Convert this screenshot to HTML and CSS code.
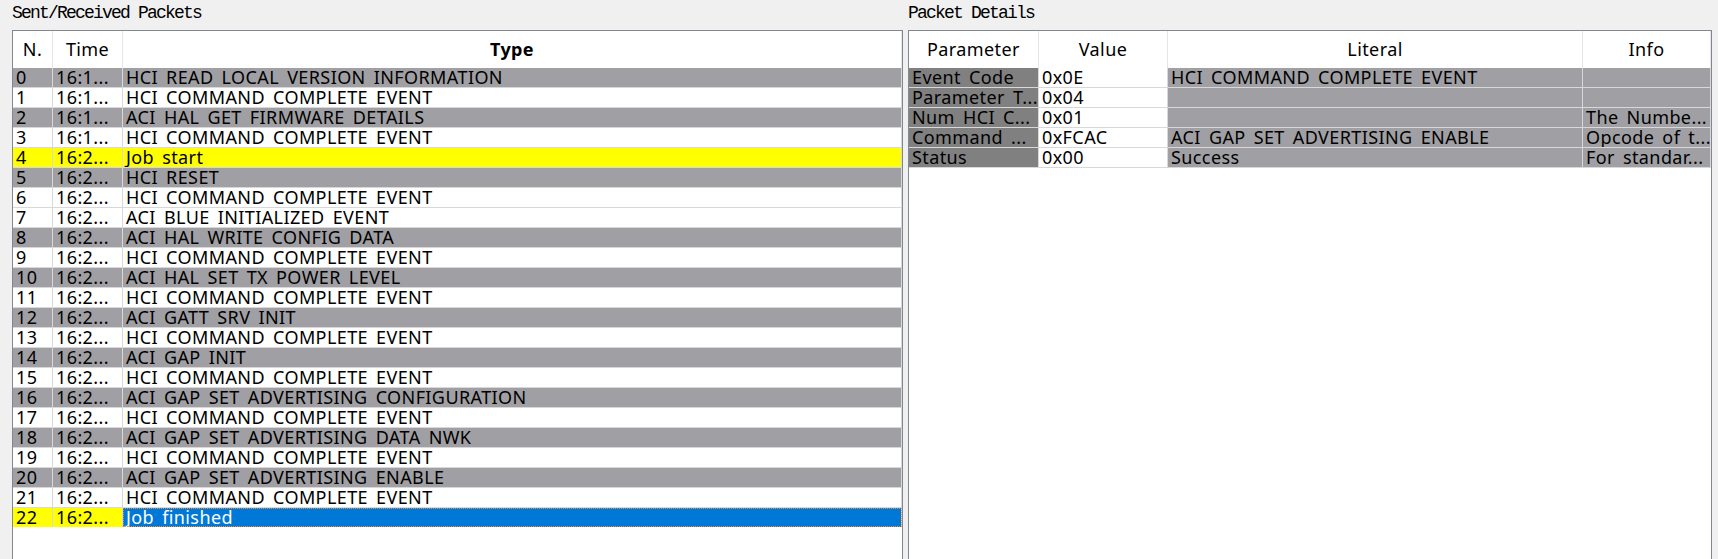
FILE: index.html
```html
<!DOCTYPE html>
<html>
<head>
<meta charset="utf-8">
<link rel="stylesheet" href="styles.css">
</head>
<body>
<div class="app">
  <section class="pane pane-left">
    <div class="pane-title">Sent/Received Packets</div>
    <div class="view">
      <div class="grid packets head">
        <div class="hc">N.</div><div class="hc">Time</div><div class="hc bold">Type</div>
      </div>
      <div class="grid packets row gray"><div class="c">0</div><div class="c">16:1...</div><div class="c">HCI READ LOCAL VERSION INFORMATION</div></div>
      <div class="grid packets row"><div class="c">1</div><div class="c">16:1...</div><div class="c">HCI COMMAND COMPLETE EVENT</div></div>
      <div class="grid packets row gray"><div class="c">2</div><div class="c">16:1...</div><div class="c">ACI HAL GET FIRMWARE DETAILS</div></div>
      <div class="grid packets row"><div class="c">3</div><div class="c">16:1...</div><div class="c">HCI COMMAND COMPLETE EVENT</div></div>
      <div class="grid packets row yellow"><div class="c">4</div><div class="c">16:2...</div><div class="c">Job start</div></div>
      <div class="grid packets row gray"><div class="c">5</div><div class="c">16:2...</div><div class="c">HCI RESET</div></div>
      <div class="grid packets row"><div class="c">6</div><div class="c">16:2...</div><div class="c">HCI COMMAND COMPLETE EVENT</div></div>
      <div class="grid packets row"><div class="c">7</div><div class="c">16:2...</div><div class="c">ACI BLUE INITIALIZED EVENT</div></div>
      <div class="grid packets row gray"><div class="c">8</div><div class="c">16:2...</div><div class="c">ACI HAL WRITE CONFIG DATA</div></div>
      <div class="grid packets row"><div class="c">9</div><div class="c">16:2...</div><div class="c">HCI COMMAND COMPLETE EVENT</div></div>
      <div class="grid packets row gray"><div class="c">10</div><div class="c">16:2...</div><div class="c">ACI HAL SET TX POWER LEVEL</div></div>
      <div class="grid packets row"><div class="c">11</div><div class="c">16:2...</div><div class="c">HCI COMMAND COMPLETE EVENT</div></div>
      <div class="grid packets row gray"><div class="c">12</div><div class="c">16:2...</div><div class="c">ACI GATT SRV INIT</div></div>
      <div class="grid packets row"><div class="c">13</div><div class="c">16:2...</div><div class="c">HCI COMMAND COMPLETE EVENT</div></div>
      <div class="grid packets row gray"><div class="c">14</div><div class="c">16:2...</div><div class="c">ACI GAP INIT</div></div>
      <div class="grid packets row"><div class="c">15</div><div class="c">16:2...</div><div class="c">HCI COMMAND COMPLETE EVENT</div></div>
      <div class="grid packets row gray"><div class="c">16</div><div class="c">16:2...</div><div class="c">ACI GAP SET ADVERTISING CONFIGURATION</div></div>
      <div class="grid packets row"><div class="c">17</div><div class="c">16:2...</div><div class="c">HCI COMMAND COMPLETE EVENT</div></div>
      <div class="grid packets row gray"><div class="c">18</div><div class="c">16:2...</div><div class="c">ACI GAP SET ADVERTISING DATA NWK</div></div>
      <div class="grid packets row"><div class="c">19</div><div class="c">16:2...</div><div class="c">HCI COMMAND COMPLETE EVENT</div></div>
      <div class="grid packets row gray"><div class="c">20</div><div class="c">16:2...</div><div class="c">ACI GAP SET ADVERTISING ENABLE</div></div>
      <div class="grid packets row"><div class="c">21</div><div class="c">16:2...</div><div class="c">HCI COMMAND COMPLETE EVENT</div></div>
      <div class="grid packets row yellow last"><div class="c">22</div><div class="c">16:2...</div><div class="c selected">Job finished</div></div>
    </div>
  </section>
  <section class="pane pane-right">
    <div class="pane-title">Packet Details</div>
    <div class="view">
      <div class="grid details head">
        <div class="hc">Parameter</div><div class="hc">Value</div><div class="hc">Literal</div><div class="hc">Info</div>
      </div>
      <div class="grid details row"><div class="c dark">Event Code</div><div class="c white">0x0E</div><div class="c gray">HCI COMMAND COMPLETE EVENT</div><div class="c gray"></div></div>
      <div class="grid details row"><div class="c dark">Parameter T...</div><div class="c white">0x04</div><div class="c gray"></div><div class="c gray"></div></div>
      <div class="grid details row"><div class="c dark">Num HCI C...</div><div class="c white">0x01</div><div class="c gray"></div><div class="c gray">The Numbe...</div></div>
      <div class="grid details row"><div class="c dark">Command ...</div><div class="c white">0xFCAC</div><div class="c gray">ACI GAP SET ADVERTISING ENABLE</div><div class="c gray">Opcode of t...</div></div>
      <div class="grid details row"><div class="c dark">Status</div><div class="c white">0x00</div><div class="c gray">Success</div><div class="c gray">For standar...</div></div>
    </div>
  </section>
</div>
</body>
</html>
```

FILE: styles.css
```css
html, body {
  margin: 0;
  padding: 0;
  height: 559px;
  overflow: hidden;
  background: #f0f0f0;
}

.app {
  display: flex;
  height: 559px;
  padding: 0 6px 0 12px;
  gap: 5px;
  box-sizing: border-box;
}

.pane {
  display: flex;
  flex-direction: column;
}

.pane-left { width: 891px; }
.pane-right { width: 804px; }

.pane-title {
  height: 30px;
  font-family: "Liberation Mono", monospace;
  font-size: 18px;
  letter-spacing: -1.8px;
  line-height: 26px;
  color: #000;
  white-space: nowrap;
}

.view {
  flex: 1;
  background: #fff;
  border: 1px solid #828790;
  border-bottom: none;
  font-family: "Noto Sans", sans-serif;
  font-size: 18px;
  letter-spacing: 0.4px;
  word-spacing: 3px;
  color: #000;
}

.grid {
  display: grid;
}

.packets { grid-template-columns: 40px 70px 1fr; }
.details { grid-template-columns: 130px 129px 415px 1fr; }

.head {
  height: 37px;
  background: #fff;
}

.hc {
  border-right: 1px solid #e5e5e5;
  text-align: center;
  line-height: 37px;
  white-space: nowrap;
  overflow: hidden;
}

.hc.bold { font-weight: bold; }

.row {
  height: 20px;
  border-bottom: 1px solid #d8d8d8;
  box-sizing: border-box;
}

.row.last { border-bottom: none; height: 19px; }

.c {
  border-right: 1px solid #d8d8d8;
  line-height: 19px;
  height: 19px;
  padding-left: 3px;
  white-space: nowrap;
  overflow: hidden;
}

.row.gray .c, .c.gray { background: #a0a0a4; }
.c.dark { background: #808080; }
.c.white { background: #fff; }
.row.yellow .c { background: #ffff00; }

.row .c.selected {
  background: #0078d7;
  color: #fff;
  outline: 1px dotted #f09030;
  outline-offset: -1px;
}
```
